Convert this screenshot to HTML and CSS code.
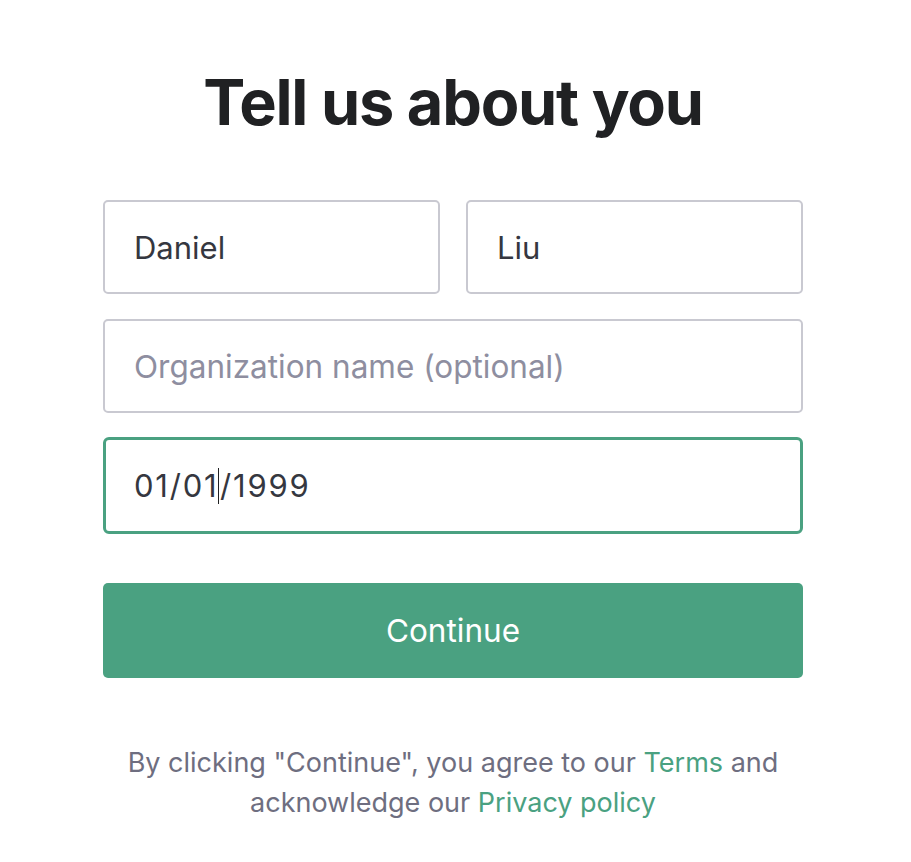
FILE: index.html
```html
<!DOCTYPE html>
<html lang="en">
<head>
<meta charset="utf-8">
<title>Tell us about you</title>
<link rel="stylesheet" href="styles.css">
</head>
<body>
<main class="page">
  <h1 class="title">Tell us about you</h1>
  <form class="form">
    <div class="row">
      <div class="field"><span class="value">Daniel</span></div>
      <div class="field"><span class="value">Liu</span></div>
    </div>
    <div class="field"><span class="placeholder">Organization name (optional)</span></div>
    <div class="field field-focus"><span class="value date">01/01<span class="caret"></span>/1999</span></div>
    <button type="button" class="btn">Continue</button>
  </form>
  <div class="legal">
    <div class="legal-line"><span>By clicking "Continue", you agree to our</span> <a class="link" href="#">Terms</a> <span>and</span></div>
    <div class="legal-line"><span>acknowledge our</span> <a class="link" href="#">Privacy policy</a></div>
  </div>
</main>
</body>
</html>
```
FILE: styles.css
```css
html, body {
  margin: 0;
  padding: 0;
  background: #ffffff;
}
body {
  font-family: Inter, "Noto Sans", "Liberation Sans", sans-serif;
  color: #2d333a;
}
.page {
  width: 700px;
  margin-left: 103px;
  padding-top: 62px;
}
.title {
  margin: 0;
  text-align: center;
  font-size: 63px;
  font-weight: 700;
  letter-spacing: -1.2px;
  line-height: 80px;
  color: #202123;
}
.form {
  margin-top: 58px;
  display: flex;
  flex-direction: column;
  gap: 25px;
}
.row {
  display: flex;
  gap: 26px;
}
.row .field {
  flex: 1;
}
.field {
  box-sizing: border-box;
  height: 94px;
  border: 2px solid #c9c9d1;
  border-radius: 5px;
  padding: 0 29px;
  display: flex;
  align-items: center;
  font-size: 31px;
}
.field-focus {
  border: 3px solid #4aa181;
  border-radius: 6px;
  height: 97px;
  padding: 0 28px;
  margin-top: -1px;
}
.value {
  color: #353740;
  display: inline-flex;
  align-items: center;
}
.date {
  letter-spacing: 1.8px;
}
.placeholder {
  color: #8e8ea0;
  font-size: 31.5px;
}
.caret {
  display: inline-block;
  width: 1.5px;
  height: 36px;
  background: #202123;
  margin: 0 1px 0 -1px;
}
.btn {
  margin-top: 24px;
  height: 95px;
  border: none;
  border-radius: 5px;
  background: #4aa181;
  color: #ffffff;
  font-family: inherit;
  font-size: 31.5px;
  cursor: pointer;
}
.legal {
  margin-top: 65px;
  text-align: center;
  font-size: 27px;
  line-height: 40px;
  color: #6e6e80;
}
.legal-line {
  white-space: nowrap;
}
.link {
  color: #4aa181;
  text-decoration: none;
}
```
